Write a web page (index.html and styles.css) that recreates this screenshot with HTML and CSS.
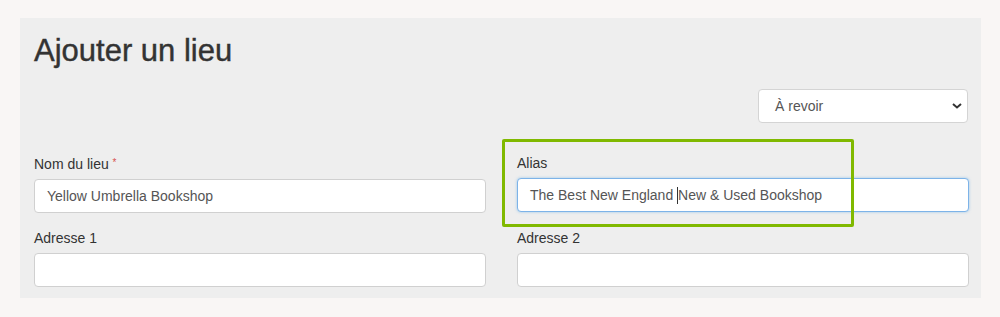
FILE: index.html
```html
<!DOCTYPE html>
<html lang="fr">
<head>
    <meta charset="UTF-8">
    <meta name="viewport" content="width=device-width, initial-scale=1.0">
    <title>Ajouter un lieu</title>
    <link rel="stylesheet" href="styles.css">
</head>
<body>
    <div class="panel">
        <h1>Ajouter un lieu</h1>
        <div class="status-row">
            <div class="select-wrap">
                <div class="select">À revoir</div>
                <svg class="chevron" width="10" height="6" viewBox="0 0 10 6">
                    <path d="M1 1 L5 4.5 L9 1" fill="none" stroke="#333" stroke-width="2"/>
                </svg>
            </div>
        </div>
        <div class="form-grid">
            <div class="form-group">
                <label>Nom du lieu <span class="required">*</span></label>
                <div class="input">Yellow Umbrella Bookshop</div>
            </div>
            <div class="form-group highlighted">
                <label>Alias</label>
                <div class="input focused">The Best New England <span class="caret"></span>New &amp; Used Bookshop</div>
                <div class="highlight-box"></div>
            </div>
            <div class="form-group">
                <label>Adresse 1</label>
                <div class="input"></div>
            </div>
            <div class="form-group">
                <label>Adresse 2</label>
                <div class="input"></div>
            </div>
        </div>
    </div>
</body>
</html>
```

FILE: styles.css
```css
body {
    font-family: 'Liberation Sans', Arial, sans-serif;
    margin: 0;
    padding: 18px 19px 0 20px;
    background-color: #f9f6f5;
    color: #333;
}
.panel {
    background: #eeeeee;
    padding: 16px 12px 11px 14px;
}
.panel h1 {
    margin: 0;
    font-size: 31px;
    line-height: 34px;
    font-weight: normal;
    color: #333;
    -webkit-text-stroke: 0.4px #333;
}
.status-row {
    display: flex;
    justify-content: flex-end;
    margin-top: 21px;
    padding-right: 1px;
}
.select-wrap {
    position: relative;
}
.select {
    width: 210px;
    height: 34px;
    box-sizing: border-box;
    background: #fff;
    border: 1px solid #d4d4d4;
    border-radius: 4px;
    padding: 0 16px;
    font-size: 14px;
    line-height: 32px;
    color: #555;
}
.chevron {
    position: absolute;
    right: 6px;
    top: 14px;
}
.form-grid {
    display: grid;
    grid-template-columns: 1fr 1fr;
    column-gap: 31px;
    row-gap: 15px;
    margin-top: 30px;
}
.form-group {
    position: relative;
}
.form-group label {
    display: block;
    font-size: 14px;
    line-height: 20px;
    margin-bottom: 5px;
    color: #333;
}
.required {
    color: #d9534f;
    font-size: 10px;
    vertical-align: 3px;
}
.input {
    height: 34px;
    box-sizing: border-box;
    background: #fff;
    border: 1px solid #d0d0d0;
    border-radius: 4px;
    padding: 0 12px;
    font-size: 14px;
    line-height: 32px;
    color: #555;
    white-space: nowrap;
}
.input.focused {
    border-color: #7db3e8;
    box-shadow: 0 0 3px rgba(102, 175, 233, 0.6);
}
.caret {
    display: inline-block;
    width: 0;
    height: 17px;
    border-left: 1px solid #333;
    vertical-align: -4px;
}
.highlight-box {
    position: absolute;
    left: -15px;
    top: -14px;
    width: 346px;
    height: 82px;
    border: 3px solid #80b900;
    border-radius: 2px;
    pointer-events: none;
}
```
